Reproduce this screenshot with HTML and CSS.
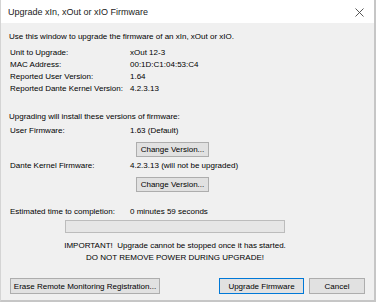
FILE: index.html
```html
<!DOCTYPE html>
<html>
<head>
<meta charset="utf-8">
<link rel="stylesheet" href="styles.css">
</head>
<body>
<div class="window">
  <div class="titlebar">
    <span class="title">Upgrade xIn, xOut or xIO Firmware</span>
    <svg class="close" width="9" height="9" viewBox="0 0 9 9"><path d="M0.5 0.5L8.5 8.5M8.5 0.5L0.5 8.5" stroke="#444" stroke-width="0.9" fill="none"/></svg>
  </div>
  <div class="content">
    <div class="line intro">Use this window to upgrade the firmware of an xIn, xOut or xIO.</div>
    <div class="info">
      <div class="row"><span class="label">Unit to Upgrade:</span><span class="value">xOut 12-3</span></div>
      <div class="row"><span class="label">MAC Address:</span><span class="value">00:1D:C1:04:53:C4</span></div>
      <div class="row"><span class="label">Reported User Version:</span><span class="value">1.64</span></div>
      <div class="row"><span class="label">Reported Dante Kernel Version:</span><span class="value">4.2.3.13</span></div>
    </div>
    <div class="line section">Upgrading will install these versions of firmware:</div>
    <div class="fwrow first">
      <span class="label">User Firmware:</span>
      <div class="fwcol">
        <span class="value">1.63 (Default)</span>
        <button class="btn change">Change Version...</button>
      </div>
    </div>
    <div class="fwrow second">
      <span class="label">Dante Kernel Firmware:</span>
      <div class="fwcol">
        <span class="value">4.2.3.13 (will not be upgraded)</span>
        <button class="btn change">Change Version...</button>
      </div>
    </div>
    <div class="row estimate"><span class="label">Estimated time to completion:</span><span class="value">0 minutes 59 seconds</span></div>
    <div class="progress-area">
      <div class="progress"></div>
      <div class="warning">IMPORTANT!&nbsp; Upgrade cannot be stopped once it has started.<br>DO NOT REMOVE POWER DURING UPGRADE!</div>
    </div>
    <div class="buttons">
      <button class="btn erase">Erase Remote Monitoring Registration...</button>
      <div class="right-buttons">
        <button class="btn default upgrade">Upgrade Firmware</button>
        <button class="btn cancel">Cancel</button>
      </div>
    </div>
  </div>
</div>
</body>
</html>
```

FILE: styles.css
```css
* { box-sizing: border-box; }
html, body {
  margin: 0;
  padding: 0;
  background: #ffffff;
}
body {
  font-family: "Liberation Sans", Arial, sans-serif;
  font-size: 8px;
  color: #000;
}
.window {
  width: 376px;
  height: 302px;
  background: #f0f0f0;
  border-left: 1px solid #d4d4d4;
  border-right: 2px solid #c6c6c6;
  border-bottom: 2px solid #c6c6c6;
  display: flex;
  flex-direction: column;
  overflow: hidden;
}
.titlebar {
  flex: none;
  height: 23px;
  background: #ffffff;
  display: flex;
  align-items: center;
  justify-content: space-between;
  padding: 1px 10px 0 7px;
}
.title {
  font-size: 9px;
  color: #222;
}
.close {
  display: block;
  margin-top: 1px;
}
.content {
  flex: none;
  padding: 8px 0 0 8px;
  line-height: 12px;
}
.line { height: 12px; }
.intro { margin-bottom: 4px; }
.row {
  display: flex;
  height: 12px;
}
.label {
  width: 121px;
  flex: none;
  padding-left: 1px;
}
.value { white-space: nowrap; }
.section { margin-top: 16px; }
.fwrow {
  display: flex;
}
.fwrow.first { margin-top: 2px; }
.fwrow.second { margin-top: 3px; }
.fwcol {
  display: flex;
  flex-direction: column;
  align-items: flex-start;
}
.btn {
  font-family: "Liberation Sans", Arial, sans-serif;
  font-size: 8px;
  color: #000;
  background: #e1e1e1;
  border: 1px solid #adadad;
  margin: 0;
  padding: 0;
  line-height: 13px;
  height: 15px;
}
.change {
  width: 73px;
  margin-top: 5px;
  margin-left: 6px;
}
.estimate { margin-top: 14px; }
.progress-area {
  width: 220px;
  margin-left: 56px;
  display: flex;
  flex-direction: column;
  align-items: stretch;
}
.progress {
  height: 13px;
  margin-top: 2px;
  background: #e6e6e6;
  border: 1px solid #bcbcbc;
}
.warning {
  margin-top: 7px;
  text-align: center;
  line-height: 12px;
  white-space: nowrap;
  display: flex;
  flex-direction: column;
  align-items: center;
}
.buttons {
  display: flex;
  justify-content: space-between;
  margin-top: 14px;
  padding-right: 9px;
}
.btn.erase {
  width: 150px;
  height: 16px;
  margin-left: 1px;
}
.right-buttons {
  display: flex;
  gap: 5px;
}
.btn.upgrade {
  width: 85px;
  height: 16px;
  border-color: #0078d7;
}
.btn.cancel {
  width: 56px;
  height: 16px;
}
```
